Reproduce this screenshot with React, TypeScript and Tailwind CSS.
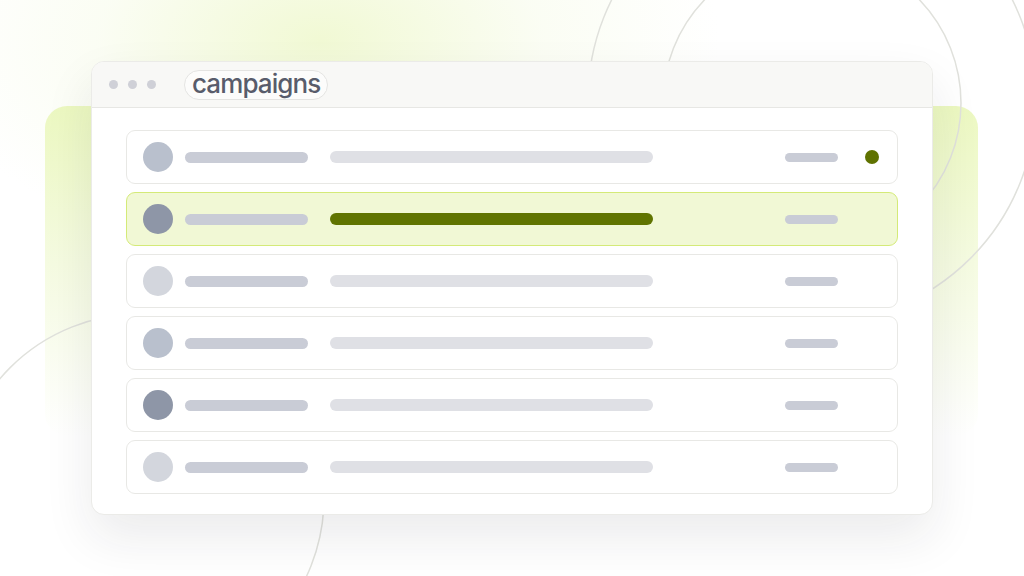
import React from "react";

type Row = {
  avatar: string;
  active?: boolean;
  dot?: boolean;
};

const ROWS: Row[] = [
  { avatar: "bg-[#b9c0cd]", dot: true },
  { avatar: "bg-[#8e96a7]", active: true },
  { avatar: "bg-[#d3d6dd]" },
  { avatar: "bg-[#b9c0cd]" },
  { avatar: "bg-[#8e96a7]" },
  { avatar: "bg-[#d3d6dd]" },
];

const CampaignRow: React.FC<{ row: Row }> = ({ row }) => (
  <div
    className={`flex h-[54px] items-center rounded-[9px] border pl-[16px] pr-[18px] ${
      row.active ? "border-[#d4ea78] bg-[#f1f8d5]" : "border-[#e8e8e5] bg-white"
    }`}
  >
    <div className={`h-[30px] w-[30px] shrink-0 rounded-full ${row.avatar}`} />
    <div className="ml-[12px] h-[11px] w-[123px] shrink-0 rounded-full bg-[#c9ccd6]" />
    <div
      className={`ml-[22px] h-[12px] w-[323px] shrink-0 rounded-full ${
        row.active ? "bg-[#607400]" : "bg-[#dfe0e5]"
      }`}
    />
    <div className="ml-auto h-[9px] w-[53px] shrink-0 rounded-full bg-[#c9ccd6]" />
    <div className="ml-[27px] flex w-[14px] shrink-0 justify-center">
      {row.dot && <div className="h-[14px] w-[14px] rounded-full bg-[#5f7200]" />}
    </div>
  </div>
);

export default function App() {
  return (
    <div className="relative h-[576px] w-[1024px] overflow-hidden bg-white font-['Inter',sans-serif]">
      {/* soft glow top left */}
      <div className="absolute inset-0 bg-[radial-gradient(ellipse_400px_220px_at_320px_40px,#f1f9d4_0%,rgba(248,252,236,0.6)_55%,rgba(255,255,255,0)_100%)]" />

      {/* lime panel behind window */}
      <div className="absolute left-[45px] top-[106px] h-[330px] w-[933px] rounded-[22px] bg-[linear-gradient(180deg,#ecf8c1_0%,rgba(240,249,210,0.7)_45%,rgba(255,255,255,0)_100%)]" />

      {/* decorative rings */}
      <svg className="absolute inset-0" width="1024" height="576" viewBox="0 0 1024 576" fill="none">
        <circle cx="812" cy="103" r="149" stroke="#e0e1dc" strokeWidth="1.5" />
        <circle cx="812" cy="100" r="224" stroke="#e0e1dc" strokeWidth="1.5" />
        <circle cx="140" cy="498" r="184" stroke="#e0e1dc" strokeWidth="1.5" />
      </svg>

      {/* window */}
      <div className="relative ml-[91px] mt-[61px] flex h-[454px] w-[842px] flex-col overflow-hidden rounded-[13px] border border-[#ebebe8] bg-white shadow-[0_22px_50px_rgba(30,30,40,0.09)]">
        <div className="flex h-[46px] shrink-0 items-center border-b border-[#e7e7e4] bg-[#f8f8f6] pl-[17px]">
          <div className="flex gap-[10px]">
            <span className="h-[9px] w-[9px] rounded-full bg-[#cfd0d7]" />
            <span className="h-[9px] w-[9px] rounded-full bg-[#cfd0d7]" />
            <span className="h-[9px] w-[9px] rounded-full bg-[#cfd0d7]" />
          </div>
          <div className="ml-[28px] flex h-[30px] items-center rounded-full border border-[#e4e4e2] bg-[#fcfcfb] px-[7px]">
            <span className="-mt-[2px] text-[26px] font-medium leading-none tracking-[-0.035em] text-[#585c6b]">
              campaigns
            </span>
          </div>
        </div>

        <div className="flex flex-col gap-[8px] px-[34px] pt-[22px]">
          {ROWS.map((row, i) => (
            <CampaignRow key={i} row={row} />
          ))}
        </div>
      </div>
    </div>
  );
}
